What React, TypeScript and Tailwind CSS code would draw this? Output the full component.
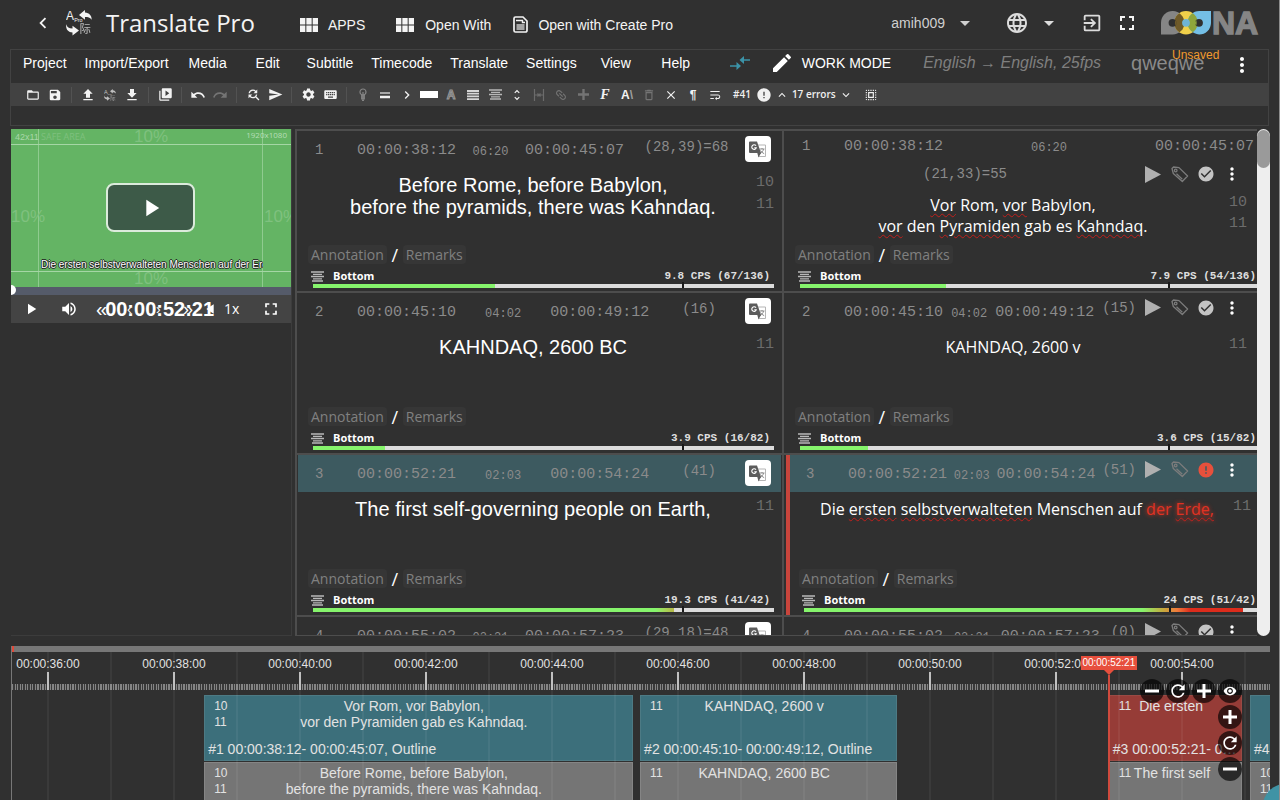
import React from 'react';
import {
  MdAdd, MdCheckCircle, MdChevronLeft, MdChevronRight, MdClose, MdDeleteOutline, MdEdit, MdError,
  MdExitToApp, MdExpandLess, MdExpandMore, MdFileDownload, MdFileUpload, MdFindReplace, MdFolderOpen,
  MdFullscreen, MdKeyboard, MdLanguage, MdLink, MdMoreVert, MdPlayArrow, MdRedo,
  MdRemoveRedEye, MdSave, MdSelectAll, MdSend, MdSettings, MdUndo, MdUnfoldMore,
  MdVideoLibrary, MdViewModule, MdVolumeUp, MdWrapText, MdRefresh, MdArrowDropDown,
} from 'react-icons/md';

const SANS = "font-['Liberation_Sans',Arial,sans-serif]";
const OPEN = "font-['Open_Sans',sans-serif]";
const MONO = "font-['Liberation_Mono',monospace]";

/* ---------- data ---------- */

type Word = { t: string; bad?: boolean; over?: boolean };
type Side = {
  dur: string; count: string; lines: Word[][]; nums: string[]; cps: string; fill: number; grad?: string;
};
type Row = { id: number; start: string; end: string; active?: boolean; src: Side; dst: Side };

const GREEN = 'bg-[#86f46c]';

const rows: Row[] = [
  {
    id: 1, start: '00:00:38:12', end: '00:00:45:07',
    src: {
      dur: '06:20', count: '(28,39)=68', nums: ['10', '11'], cps: '9.8 CPS (67/136)', fill: 39.5,
      lines: [[{ t: 'Before Rome, before Babylon,' }], [{ t: 'before the pyramids, there was Kahndaq.' }]],
    },
    dst: {
      dur: '06:20', count: '(21,33)=55', nums: ['10', '11'], cps: '7.9 CPS (54/136)', fill: 31.8,
      lines: [
        [{ t: 'Vor', bad: true }, { t: ' Rom, ' }, { t: 'vor', bad: true }, { t: ' Babylon,' }],
        [{ t: 'vor', bad: true }, { t: ' den ' }, { t: 'Pyramiden', bad: true }, { t: ' gab es ' }, { t: 'Kahndaq', bad: true }, { t: '.' }],
      ],
    },
  },
  {
    id: 2, start: '00:00:45:10', end: '00:00:49:12',
    src: { dur: '04:02', count: '(16)', nums: ['11'], cps: '3.9 CPS (16/82)', fill: 15.7, lines: [[{ t: 'KAHNDAQ, 2600 BC' }]] },
    dst: { dur: '04:02', count: '(15)', nums: ['11'], cps: '3.6 CPS (15/82)', fill: 14.7, lines: [[{ t: 'KAHNDAQ, 2600 v' }]] },
  },
  {
    id: 3, start: '00:00:52:21', end: '00:00:54:24', active: true,
    src: {
      dur: '02:03', count: '(41)', nums: ['11'], cps: '19.3 CPS (41/42)', fill: 78.2,
      grad: 'bg-linear-to-r from-[#86f46c] from-95% to-[#b5b545]',
      lines: [[{ t: 'The first self-governing people on Earth,' }]],
    },
    dst: {
      dur: '02:03', count: '(51)', nums: ['11'], cps: '24 CPS (51/42)', fill: 96.3,
      grad: 'bg-[linear-gradient(to_right,#86f46c_77%,#c8a63c_82%,#f07b3c_85%,#dd2c1c_88%)]',
      lines: [[
        { t: 'Die ' }, { t: 'ersten', bad: true }, { t: ' ' }, { t: 'selbstverwalteten', bad: true },
        { t: ' Menschen auf ' }, { t: 'der ', over: true }, { t: 'Erde,', bad: true, over: true },
      ]],
    },
  },
  {
    id: 4, start: '00:00:55:02', end: '00:00:57:23',
    src: { dur: '02:21', count: '(29,18)=48', nums: [], cps: '17 CPS (47/56)', fill: 60, lines: [] },
    dst: { dur: '02:21', count: '(0)', nums: [], cps: '0 CPS (0/56)', fill: 0, lines: [] },
  },
];

/* ---------- drawings ---------- */

function TranslateGlyph({ className }: { className: string }) {
  return (
    <svg viewBox="0 0 24 24" className={className} aria-hidden="true">
      <text x="0" y="9.500" fontSize="11" fill="currentColor" fontFamily="Liberation Sans">A</text>
      <text x="7.500" y="11.500" fontSize="5" fill="currentColor" fontFamily="Liberation Sans">Pro</text>
      <text x="12.500" y="21" fontSize="10.500" fill="currentColor" opacity=".7" fontFamily="Noto Sans CJK SC">际</text>
      <path d="M12 4.500 L17.500 0 V2.300 C21.500 2.700 23.700 5 23.700 9 C22 7 20.500 6.500 17.500 6.500 V9 Z" fill="currentColor" />
      <path d="M0.200 13.200 C1 16 2.600 17 6 17 V14.500 L12 19 L6 23.500 V20.800 C2 20.500 -0.400 18 0.200 13.200 Z" fill="currentColor" />
    </svg>
  );
}

function GoogleTranslateGlyph() {
  return (
    <svg viewBox="0 0 18 18" className="size-[18px]" aria-hidden="true">
      <path d="M8 5 H16.500 V16.500 H9.500" fill="none" stroke="#b5b5b5" strokeWidth="1" />
      <path d="M10.500 9 H15.500 M13 8 V9 M11 13.500 C13 12.500 14.300 11 14.500 9 M11.500 10.500 C12.500 12 13.500 13 15.200 13.700" fill="none" stroke="#8a8a8a" strokeWidth="1" />
      <path d="M1 1.500 H8 L12 13 L9.500 17.500 L8.300 13 H1 A1 1 0 0 1 0 12 V2.500 A1 1 0 0 1 1 1.500 Z" fill="#5c5c5c" />
      <path d="M7 5.800 A2.300 2.300 0 1 0 7.300 7.700 H5.300" fill="none" stroke="#fff" strokeWidth="1.100" />
    </svg>
  );
}

function OoonaLogo() {
  return (
    <svg viewBox="0 0 98 24" className="h-6 w-[98px] overflow-visible" role="img" aria-label="OOONA">
      <defs>
        <clipPath id="left-ring"><path d="M0 23.500 V11.500 A11.700 11.700 0 1 1 11.700 23.500 Z" /></clipPath>
        <clipPath id="mid-ring"><circle cx="25" cy="11.800" r="11.700" /></clipPath>
      </defs>
      <path d="M0 23.500 V11.500 A11.700 11.700 0 1 1 11.700 23.500 Z" fill="#858585" />
      <circle cx="25" cy="11.800" r="11.700" fill="#f0d04a" />
      <path d="M50 0 V12 A11.700 11.700 0 1 1 38.300 0 Z" fill="#74bfe6" />
      <circle cx="25" cy="11.800" r="11.700" fill="#6f5a28" clipPath="url(#left-ring)" />
      <path d="M50 0 V12 A11.700 11.700 0 1 1 38.300 0 Z" fill="#8fa63c" clipPath="url(#mid-ring)" />
      <circle cx="11.500" cy="11.800" r="3.900" fill="#303030" />
      <circle cx="25" cy="11.800" r="3.900" fill="#6fb4d6" />
      <circle cx="38" cy="11.800" r="3.900" fill="#303030" />
      <path d="M14.300 9 a4 4 0 0 1 0 5.600 a11 11 0 0 1 0 -5.600" fill="#6f5a28" />
      <path d="M35.300 9 a4 4 0 0 0 0 5.600 a11 11 0 0 0 0 -5.600" fill="#8fa63c" />
      <text x="51" y="23" fontSize="32" fontWeight="700" fill="#858585" stroke="#858585" strokeWidth="1.400" fontFamily="Liberation Sans">NA</text>
    </svg>
  );
}

function FileGlyph() {
  return (
    <svg viewBox="0 0 15 17" className="h-[17px] w-[15px]" aria-hidden="true">
      <path d="M1 2.500 A1.500 1.500 0 0 1 2.500 1 H10 L14 5 V14.500 A1.500 1.500 0 0 1 12.500 16 H2.500 A1.500 1.500 0 0 1 1 14.500 Z" fill="none" stroke="#f2f2f2" strokeWidth="1.700" />
      <path d="M3 4.500 H9.500 V6.500 H12" fill="none" stroke="#f2f2f2" strokeWidth="1.400" />
      <rect x="3.500" y="8" width="8" height="6" fill="#a5a5a5" />
    </svg>
  );
}

function MergeArrows() {
  return (
    <svg viewBox="0 0 20 14" className="h-[14px] w-5" fill="#3b93a8" aria-hidden="true">
      <path d="M20 3.200 V4.800 H14 V8 L9.500 4 L14 0 V3.200 Z" />
      <path d="M0 9.200 V10.800 H6.500 V14 L11 10 L6.500 6 V9.200 Z" />
    </svg>
  );
}

function TagGlyph() {
  return (
    <svg viewBox="0 0 18 17" className="h-[17px] w-[18px]" fill="none" stroke="#7c7c7c" strokeWidth="1.300" aria-hidden="true">
      <path d="M1 2.500 L2.500 1 L8 1.600 L16.600 10 L11.300 15.500 L2.300 7.500 Z" strokeLinejoin="round" />
      <circle cx="4.700" cy="4.500" r="1.300" />
      <path d="M5.500 7.800 L11.300 13.200" />
    </svg>
  );
}

function AlignGlyph() {
  return (
    <svg viewBox="0 0 13 11" className="h-[11px] w-[13px]" stroke="#b8b8b8" strokeWidth="1.300" aria-hidden="true">
      <path d="M0 1 H13 M2 3.300 H11 M0 5.500 H13 M2 7.800 H11 M1 10 H12" />
    </svg>
  );
}

function JustifyGlyph() {
  return (
    <svg viewBox="0 0 12 10" className="h-2.5 w-3" stroke="#d6d6d6" strokeWidth="1.800" aria-hidden="true">
      <path d="M0 1 H12 M0 3.700 H12 M0 6.400 H12 M0 9.100 H12" />
    </svg>
  );
}

function TwoLinesGlyph() {
  return (
    <svg viewBox="0 0 10 8" className="h-2 w-2.5" aria-hidden="true">
      <path d="M0 2 H10" stroke="#a8a8a8" strokeWidth="2" />
      <path d="M0 6 H10" stroke="#f2f2f2" strokeWidth="2.500" />
    </svg>
  );
}

function PlusGlyph({ className }: { className: string }) {
  return (
    <svg viewBox="0 0 14 14" className={className} stroke="currentColor" strokeWidth="3" aria-hidden="true"><path d="M7 0 V14 M0 7 H14" /></svg>
  );
}

function MinusGlyph() {
  return (
    <svg viewBox="0 0 14 14" className="size-3.5" stroke="currentColor" strokeWidth="3" aria-hidden="true"><path d="M0 7 H14" /></svg>
  );
}

function BulbGlyph() {
  return (
    <svg viewBox="0 0 8 13" className="h-[13px] w-2" fill="none" stroke="#858585" strokeWidth="1.200" aria-hidden="true">
      <circle cx="4" cy="4" r="3" />
      <path d="M2.700 6.500 V11 H5.300 V6.500 M4 4 V11 M3 12.400 H5" />
    </svg>
  );
}

function SplitGlyph() {
  return (
    <svg viewBox="0 0 12 12" className="size-3" fill="none" stroke="#6c6c6c" strokeWidth="1.200" aria-hidden="true">
      <path d="M1.500 0 V12 M10.500 0 V12 M1.500 6 H10.500 M4.500 4.500 L6 6 L4.500 7.500 M7.500 4.500 L6 6 L7.500 7.500" />
    </svg>
  );
}

/* ---------- header ---------- */

function Header() {
  return (
    <header className={`${SANS} flex h-[49px] shrink-0 items-center pr-5 pl-[22px] text-sm text-[#f4f4f4]`}>
      <button aria-label="Back" className="mr-3 pb-1"><MdChevronLeft className="size-[22px]" /></button>
      <TranslateGlyph className="mb-1 size-[26px]" />
      <h1 className={`${OPEN} ml-3.5 pb-1 text-2xl`}>Translate Pro</h1>
      <div className="ml-[42px] flex items-center gap-[22px]">
        <button className="mr-1.5 flex items-center gap-[7px]"><MdViewModule className="size-6" />APPS</button>
        <button className="flex items-center gap-2"><MdViewModule className="size-6" />Open With</button>
        <button className="flex items-center gap-2.5"><FileGlyph />Open with Create Pro</button>
      </div>
      <div className="ml-auto flex items-center pb-1">
        <button className="flex items-center gap-2 text-[#cfcfcf]">amih009<MdArrowDropDown className="size-6" /></button>
        <button aria-label="Language" className="ml-7 flex items-center gap-2 text-[#dcdcdc]">
          <MdLanguage className="size-6" /><MdArrowDropDown className="size-6" />
        </button>
        <button aria-label="Sign out" className="ml-5 text-[#dcdcdc]"><MdExitToApp className="size-[22px]" /></button>
        <button aria-label="Full screen" className="mr-[22px] ml-3"><MdFullscreen className="size-6" /></button>
        <OoonaLogo />
      </div>
    </header>
  );
}

const menus = ['Project', 'Import/Export', 'Media', 'Edit', 'Subtitle', 'Timecode', 'Translate', 'Settings', 'View', 'Help'];

function MenuBar() {
  return (
    <nav className={`${SANS} flex h-[33px] items-center pb-2 pl-[3px] text-sm text-white`}>
      {menus.map((m) => (
        <button key={m} className="min-w-[60px] px-[9px]">{m}</button>
      ))}
      <button aria-label="Merge" className="ml-6"><MergeArrows /></button>
      <button className="ml-5 flex items-center gap-2"><MdEdit className="size-6" />WORK MODE</button>
      <span className="ml-8 text-base text-[#7f7f7f] italic">English → English, 25fps</span>
      <span className="relative ml-[30px] text-xl text-[#8a8a8a]">
        qweqwe
        <span className="absolute top-0 left-[41px] text-xs leading-none text-[#f09a2e]">Unsaved</span>
      </span>
      <button aria-label="More" className="ml-auto pt-1 pr-3.5"><MdMoreVert className="size-6" /></button>
    </nav>
  );
}

function Tool({ label, dim, children }: { label: string; dim?: boolean; children: React.ReactNode }) {
  return (
    <button aria-label={label} className={`flex w-[22px] justify-center ${dim ? 'text-[#747474]' : 'text-[#f2f2f2]'}`}>{children}</button>
  );
}

function Sep() {
  return <span className="mr-[5px] ml-[5px] h-4 w-px bg-[#525252]" />;
}

function Toolbar() {
  const s = 'size-3.5';
  return (
    <div className="flex h-[23px] items-center bg-[#424242] pl-[11px]">
      <Tool label="Open"><MdFolderOpen className={s} /></Tool>
      <Tool label="Save"><MdSave className={s} /></Tool>
      <Sep />
      <Tool label="Import"><MdFileUpload className="size-4" /></Tool>
      <Tool label="Convert"><TranslateGlyph className="size-3 text-[#c0c0c0]" /></Tool>
      <Tool label="Export"><MdFileDownload className="size-4" /></Tool>
      <Sep />
      <Tool label="Media library"><MdVideoLibrary className="size-[15px]" /></Tool>
      <Sep />
      <Tool label="Undo"><MdUndo className="size-4" /></Tool>
      <Tool label="Redo" dim><MdRedo className="size-4" /></Tool>
      <Sep />
      <Tool label="Find and replace"><MdFindReplace className="size-[15px]" /></Tool>
      <Tool label="Go to"><MdSend className="size-[15px]" /></Tool>
      <Sep />
      <Tool label="Settings"><MdSettings className="size-[15px]" /></Tool>
      <Tool label="Shortcuts"><MdKeyboard className="size-[15px]" /></Tool>
      <Sep />
      <Tool label="Hint" dim><BulbGlyph /></Tool>
      <Tool label="Lines"><TwoLinesGlyph /></Tool>
      <Tool label="Next"><MdChevronRight className="size-4" /></Tool>
      <Tool label="Colour"><span className="h-[7px] w-[18px] bg-white" /></Tool>
      <Tool label="Outline" dim><span className={`${SANS} text-xs leading-none font-bold text-[#4a4a4a] [-webkit-text-stroke:1px_#999]`}>A</span></Tool>
      <Tool label="Justify"><JustifyGlyph /></Tool>
      <Tool label="Centre"><AlignGlyph /></Tool>
      <Tool label="Vertical position"><MdUnfoldMore className={s} /></Tool>
      <Tool label="Split" dim><SplitGlyph /></Tool>
      <Tool label="Link" dim><MdLink className="size-3.5 rotate-45" /></Tool>
      <Tool label="Add" dim><PlusGlyph className="size-[11px]" /></Tool>
      <Tool label="Font"><span className="font-['Liberation_Serif',serif] text-sm leading-none font-bold italic">F</span></Tool>
      <Tool label="Font case"><span className={`${SANS} text-xs leading-none font-bold`}>A<span className="text-[#a0a0a0]">\</span></span></Tool>
      <Tool label="Delete" dim><MdDeleteOutline className={s} /></Tool>
      <Tool label="Clear"><MdClose className={s} /></Tool>
      <Tool label="Paragraph"><span className={`${SANS} text-xs leading-none font-bold`}>¶</span></Tool>
      <Tool label="Wrap"><MdWrapText className={s} /></Tool>
      <span className={`${OPEN} ml-[7px] flex items-center text-[10px] font-semibold text-[#f0f0f0]`}>
        #41
        <MdError className="ml-[5px] size-4" />
        <button aria-label="Previous error" className="px-[3px]"><MdExpandLess className="size-3.5" /></button>
        17 errors
        <button aria-label="Next error" className="px-[3px]"><MdExpandMore className="size-3.5" /></button>
      </span>
      <span className="w-1" />
      <Tool label="Select all"><MdSelectAll className={s} /></Tool>
    </div>
  );
}

/* ---------- video ---------- */

function VideoPanel() {
  return (
    <section className={`${SANS} w-[281px] shrink-0 border-r border-b border-[#3c3c3c]`}>
      <div className="relative h-[158px] overflow-hidden bg-[#64b464]">
        <span className="absolute inset-y-0 left-[27px] w-px bg-[#8fcb8f]" />
        <span className="absolute inset-y-0 right-[28px] w-px bg-[#8fcb8f]" />
        <span className="absolute inset-x-0 top-[15px] h-px bg-[#a5d6a5]" />
        <span className="absolute inset-x-0 bottom-[15px] h-px bg-[#a5d6a5]" />
        <span className="absolute top-0.5 left-1 text-[9px] leading-3 text-[#a9d7a9]">42x11</span>
        <span className={`${OPEN} absolute top-0.5 left-[30px] text-[9px] leading-3 text-[#7ec07e]`}>SAFE AREA</span>
        <span className={`${OPEN} absolute top-0 right-1 text-[8px] leading-3 text-[#b7deb7]`}>1920x1080</span>
        <span className="absolute -top-1 left-[123px] text-[17px] leading-6 text-[#7fc17f]">10%</span>
        <span className="absolute -bottom-1 left-[123px] text-[17px] leading-6 text-[#7fc17f]">10%</span>
        <span className="absolute top-[76px] left-0 text-[17px] leading-6 text-[#7fc17f]">10%</span>
        <span className="absolute top-[76px] left-[253px] text-[17px] leading-6 text-[#7fc17f]">10%</span>
        <button aria-label="Play video" className="absolute top-[54px] left-[95px] flex h-[49px] w-[89px] items-center justify-center rounded-lg border-2 border-[#dcebdc] bg-[#3d5a48]">
          <MdPlayArrow className="size-7 text-white" />
        </button>
        <p className="absolute bottom-4 left-[30px] w-[222px] overflow-hidden text-[10px] leading-3 whitespace-nowrap text-white [text-shadow:1px_0_#222,-1px_0_#222,0_1px_#222,0_-1px_#222]">
          Die ersten selbstverwalteten Menschen auf der Erde,
        </p>
      </div>
      <div className="relative h-2 bg-[#555b6a]">
        <span className="absolute -top-0.5 left-0 h-[10px] w-[5px] rounded-r-full bg-white" />
      </div>
      <div className="relative flex h-7 items-center bg-[#444] pr-2.5 pl-[11px] text-white">
        <button aria-label="Play"><MdPlayArrow className="size-[18px]" /></button>
        <button aria-label="Volume" className="ml-5"><MdVolumeUp className="size-[18px]" /></button>
        <span className="ml-[18px] text-xl">«</span>
        <span className="-ml-0.5 text-xl font-bold">00:00:52:21</span>
        <button className={`${OPEN} ml-2.5 text-sm`}>1x</button>
        <button aria-label="Full screen" className="ml-auto"><MdFullscreen className="size-5" /></button>
        <span className="absolute left-[116px] text-sm">‹</span>
        <span className="absolute left-[145px] text-sm">›</span>
        <span className="absolute left-[172px] text-lg">»</span>
        <MdPlayArrow className="absolute left-[192px] size-4 rotate-180" />
      </div>
    </section>
  );
}

/* ---------- subtitle grid ---------- */

function Times({ row, side }: { row: Row; side: Side }) {
  return (
    <>
      <span className="pt-1 text-[15px]">{row.start}</span>
      <span className="pt-1 text-xs">{side.dur}</span>
      <span className="pt-1 text-[15px]">{row.end}</span>
    </>
  );
}

function CellFooter({ side }: { side: Side }) {
  return (
    <div className="mt-auto pb-[3px]">
      <div className={`${OPEN} flex h-[19px] items-center text-sm text-[#808080]`}>
        <button className="rounded-sm bg-[#363636] px-[3px] leading-[19px]">Annotation</button>
        <span className="w-4 text-center text-lg text-white">/</span>
        <button className="rounded-sm bg-[#363636] px-[3px] leading-[19px]">Remarks</button>
      </div>
      <div className="mt-[5px] flex h-[14px] items-center pr-1 pl-[3px]">
        <AlignGlyph />
        <span className={`${OPEN} ml-[9px] text-[11px] font-bold text-white`}>Bottom</span>
        <span className={`${MONO} ml-auto text-[11px] font-bold text-[#dedede]`}>{side.cps}</span>
      </div>
      <div className="relative mt-px ml-[5px] h-1 bg-[#dcdcdc]">
        <div className={`h-1 ${side.grad ?? GREEN}`} style={{ width: `${side.fill}%` }} />
        <span className="absolute -top-0.5 left-[80%] h-1.5 w-0.5 bg-[#1a1a1a]" />
      </div>
    </div>
  );
}

function SourceCell({ row }: { row: Row }) {
  const s = row.src;
  return (
    <div className="flex min-w-0 flex-col border-r-2 border-[#4d4d4d] px-px">
      <div className={`${MONO} flex h-[37px] items-center pr-[10px] pl-[17px] text-[#8b8b8b] ${row.active ? 'bg-[#3d5a60]' : ''}`}>
        <span className="w-[42px] text-sm">{row.id}</span>
        <div className="flex flex-1 items-center justify-between">
          <Times row={row} side={s} />
          <span className="pb-1.5 pl-1 text-sm">{s.count}</span>
          <button aria-label="Machine translate" className="mb-0.5 flex size-[26px] items-center justify-center rounded bg-white">
            <GoogleTranslateGlyph />
          </button>
        </div>
      </div>
      <div className="flex pt-1.5 pr-[7px] pl-3">
        <div className={`${SANS} flex-1 text-center text-xl leading-[22px] text-white`}>
          {s.lines.map((l, i) => <p key={i}>{l.map((w) => w.t).join('')}</p>)}
        </div>
        <div className={`${MONO} -mt-0.5 w-[18px] text-[15px] leading-[22px] text-[#6c6c6c]`}>
          {s.nums.map((n) => <div key={n}>{n}</div>)}
        </div>
      </div>
      <div className="mt-auto pr-[7px] pl-[10px]"><CellFooter side={s} /></div>
    </div>
  );
}

function RowActions({ active }: { active?: boolean }) {
  return (
    <div className="flex items-center gap-2 pr-4">
      <button aria-label="Play line" className="flex w-[18px] justify-center">
        <svg viewBox="0 0 16 17" className="h-[17px] w-4" aria-hidden="true"><path d="M0 0 L16 8.500 L0 17 Z" fill="#b0b0b0" /></svg>
      </button>
      <button aria-label="Tag" className="ml-px"><TagGlyph /></button>
      <button aria-label="Status" className="w-[18px]">
        {active ? <MdError className="size-[18px] text-[#e8503c]" /> : <MdCheckCircle className="size-[18px] text-[#c4c4c4]" />}
      </button>
      <button aria-label="More" className="flex w-[18px] justify-center"><MdMoreVert className="size-5 shrink-0 text-white" /></button>
    </div>
  );
}

function TargetCell({ row }: { row: Row }) {
  const s = row.dst;
  const wide = s.count.length > 6 && s.lines.length > 1;
  const tint = row.active ? 'bg-[#3d5a60]' : '';
  return (
    <div className={`ml-0.5 flex min-w-0 flex-col overflow-hidden ${row.active ? 'border-l-4 border-[#c9453c]' : ''}`}>
      {wide ? (
        <div className={`${MONO} text-[#8b8b8b]`}>
          <div className="flex h-[29px] items-center pr-[3px] pl-4">
            <span className="w-[42px] text-sm">{row.id}</span>
            <div className="flex flex-1 items-center justify-between"><Times row={row} side={s} /></div>
          </div>
          <div className="flex h-7 items-center">
            <span className="flex-1 text-center text-sm">{s.count}</span>
            <RowActions />
          </div>
        </div>
      ) : (
        <div className={`${MONO} flex h-[37px] items-center pl-4 text-[#8b8b8b] ${tint}`}>
          <span className="w-[42px] text-sm">{row.id}</span>
          <div className="flex flex-1 items-center justify-between pr-2">
            <Times row={row} side={s} />
            <span className="pb-2 text-sm">{s.count}</span>
          </div>
          <div className="pb-2"><RowActions active={row.active} /></div>
        </div>
      )}
      <div className={`flex pt-[7px] pl-[11px] ${row.active ? 'pr-1.5' : 'pr-2.5'}`}>
        <div className={`${OPEN} flex-1 text-center text-base leading-[21px] whitespace-nowrap text-white`}>
          {s.lines.map((l, i) => (
            <p key={i}>
              {l.map((w, j) => (
                <span
                  key={j}
                  className={`${w.bad ? 'underline decoration-[#c0201c] decoration-wavy decoration-1 underline-offset-2' : ''} ${w.over ? 'text-[#e03222] [text-shadow:0_0_4px_#e03222]' : ''}`}
                >
                  {w.t}
                </span>
              ))}
            </p>
          ))}
        </div>
        <div className={`${MONO} -mt-[3px] w-[18px] text-[15px] leading-[21px] text-[#6c6c6c]`}>
          {s.nums.map((n) => <div key={n}>{n}</div>)}
        </div>
      </div>
      <div className="-mr-[3px] mt-auto pl-[9px]"><CellFooter side={s} /></div>
    </div>
  );
}

function SubtitleGrid() {
  return (
    <section className="ml-[3px] flex min-w-0 flex-1">
      <div className="min-w-0 flex-1 overflow-hidden border-t-2 border-b border-l-2 border-[#4d4d4d]">
        {rows.map((r) => (
          <div key={r.id} className="grid h-[162px] grid-cols-[487fr_473fr] border-b-2 border-[#4d4d4d]">
            <SourceCell row={r} />
            <TargetCell row={r} />
          </div>
        ))}
      </div>
      <div className="w-[13px] rounded-full bg-[#eee] pt-px">
        <div className="h-[38px] rounded-full bg-[#9a9a9a]" />
      </div>
    </section>
  );
}

/* ---------- timeline ---------- */

const PX_PER_SECOND = 63;
const ORIGIN = 35.43;
const at = (sec: number) => (sec - ORIGIN) * PX_PER_SECOND;

type Clip = { from: number; to: number; nums: string[]; dst: string[]; src: string[]; foot: string; red?: boolean };

const clips: Clip[] = [
  {
    from: 38.48, to: 45.28, nums: ['10', '11'], foot: '#1 00:00:38:12- 00:00:45:07, Outline',
    dst: ['Vor Rom, vor Babylon,', 'vor den Pyramiden gab es Kahndaq.'],
    src: ['Before Rome, before Babylon,', 'before the pyramids, there was Kahndaq.'],
  },
  { from: 45.4, to: 49.48, nums: ['11'], foot: '#2 00:00:45:10- 00:00:49:12, Outline', dst: ['KAHNDAQ, 2600 v'], src: ['KAHNDAQ, 2600 BC'] },
  { from: 52.84, to: 54.96, nums: ['11'], foot: '#3 00:00:52:21- 00:00:54:24', red: true, dst: ['Die ersten'], src: ['The first self'] },
  { from: 55.08, to: 57.92, nums: ['10', '11'], foot: '#4 00:00:55:02- 00:00:57:23', dst: [], src: [] },
];

function ClipBody({ nums, lines }: { nums: string[]; lines: string[] }) {
  return (
    <div className="flex pt-0.5 pr-[33px] pl-[9px]">
      <div className="w-[15px] shrink-0 text-xs leading-4">{nums.map((n) => <div key={n}>{n}</div>)}</div>
      <div className="flex-1 text-center text-sm leading-4 whitespace-nowrap">{lines.map((l) => <p key={l}>{l}</p>)}</div>
    </div>
  );
}

function RoundButton({ label, children }: { label: string; children: React.ReactNode }) {
  return (
    <button aria-label={label} className="flex size-6 items-center justify-center rounded-full bg-black/65 text-white">{children}</button>
  );
}

function Timeline() {
  const seconds = Array.from({ length: 20 }, (_, i) => 36 + i);
  return (
    <section className={`${SANS} relative mr-[9px] ml-px h-[154px] shrink-0 overflow-hidden border-l border-[#777] text-[#e2e2e2]`}>
      <div className="h-1.5 bg-[#777]"><div className="h-1.5 w-0.5 bg-[#e04a3a]" /></div>
      <div className="absolute inset-x-0 top-[38px] h-1.5 bg-[repeating-linear-gradient(to_right,#858585_0_1.3px,#3a3a3a_1.3px_2.52px)]" />
      {clips.map((c) => (
        <div key={c.from} className="absolute top-[49px]" style={{ left: at(c.from), width: (c.to - c.from) * PX_PER_SECOND }}>
          <div className={`flex h-[66px] flex-col overflow-hidden border ${c.red ? 'border-[#9a4a44] bg-[#963c37]' : 'border-[#4d7a84] bg-[#3c6f7b]'}`}>
            <ClipBody nums={c.dst.length ? c.nums : []} lines={c.dst} />
            <p className="mt-auto truncate pb-[3px] pl-[3px] text-sm leading-4">{c.foot}</p>
          </div>
          <div className="mt-px h-[66px] overflow-hidden border border-[#858585] bg-[#757575]"><ClipBody nums={c.nums} lines={c.src} /></div>
        </div>
      ))}
      {seconds.map((s) => (
        <div key={s} className="absolute top-1.5 bottom-0 flex w-20 -translate-x-1/2 flex-col items-center" style={{ left: at(s) }}>
          <span className="h-5 pt-1 text-xs leading-4 whitespace-nowrap">{s % 2 === 0 ? `00:00:${s}:00` : ''}</span>
          <span className={`h-[18px] w-0.5 ${s % 2 === 0 ? 'bg-[#bdbdbd]' : ''}`} />
          <span className="absolute inset-y-0 w-0.5 bg-white/5" />
        </div>
      ))}
      <div className="absolute top-[10px] bottom-0 flex w-14 -translate-x-1/2 flex-col items-center" style={{ left: at(52.84) }}>
        <span className="w-full bg-[#e74f3d] text-center text-[10px] leading-[14px] text-white">00:00:52:21</span>
        <svg viewBox="0 0 10 5" className="h-[5px] w-2.5" aria-hidden="true"><path d="M0 0 H10 L5 5 Z" fill="#e74f3d" /></svg>
        <span className="w-0.5 flex-1 bg-[#d04a3d]" />
      </div>
      <div className="absolute top-[33px] right-[28px] grid grid-cols-4 gap-0.5">
        <RoundButton label="Zoom out"><MinusGlyph /></RoundButton>
        <RoundButton label="Reset zoom"><MdRefresh className="size-5" /></RoundButton>
        <RoundButton label="Zoom in"><PlusGlyph className="size-3.5" /></RoundButton>
        <RoundButton label="Visibility"><MdRemoveRedEye className="size-3.5" /></RoundButton>
        <div className="col-start-4 flex flex-col gap-0.5">
          <RoundButton label="Taller"><PlusGlyph className="size-3.5" /></RoundButton>
          <RoundButton label="Reset height"><MdRefresh className="size-5" /></RoundButton>
          <RoundButton label="Shorter"><MinusGlyph /></RoundButton>
        </div>
      </div>
    </section>
  );
}

export default function App() {
  return (
    <div className="relative flex h-screen flex-col overflow-hidden border-r border-[#8d8d8d] bg-[#303030] pl-2.5">
      <Header />
      <div className="mr-2.5 h-[77px] shrink-0 border border-[#424242]">
        <MenuBar />
        <Toolbar />
      </div>
      <main className="mt-[3px] mr-[9px] flex min-h-0 flex-1 pl-px">
        <VideoPanel />
        <SubtitleGrid />
      </main>
      <div className="h-2.5 shrink-0" />
      <Timeline />
      <button aria-label="Help" className="absolute -right-7 -bottom-7 flex size-11 items-center justify-center rounded-full bg-[#3f93a5]">
        <span className="size-4 rounded-full bg-white" />
      </button>
    </div>
  );
}
